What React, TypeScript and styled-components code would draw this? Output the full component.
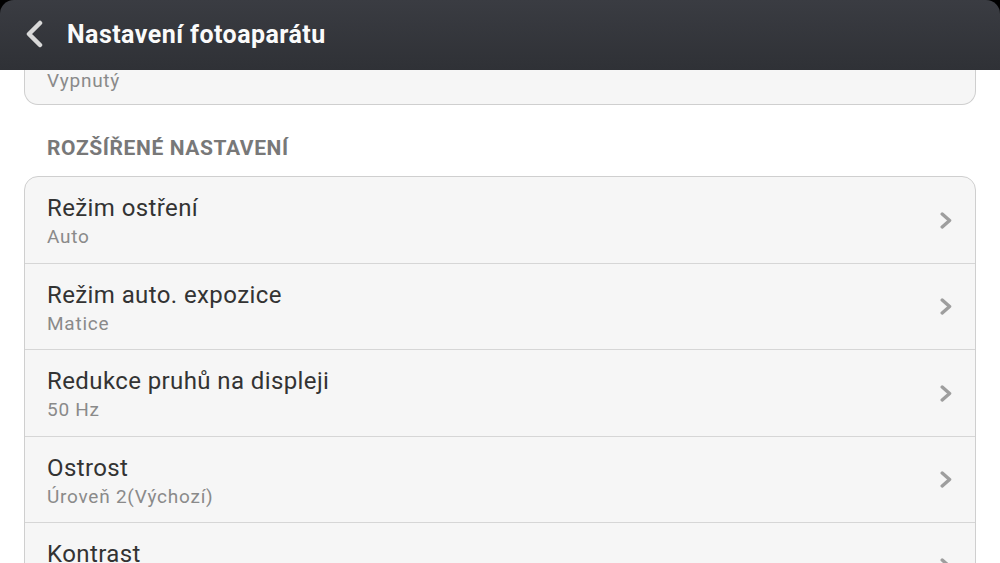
import React from "react";
import styled, { createGlobalStyle } from "styled-components";

// Camera settings screen: dark title bar, cut-off card on top, then the advanced section

const GlobalStyle = createGlobalStyle`
  html, body {
    margin: 0;
    padding: 0;
    background: #000;
    font-family: Roboto, "Noto Sans", "Liberation Sans", sans-serif;
  }
  #root {
    width: 1000px;
    height: 563px;
  }
`;

type Item = { title: string; value?: string };

const advanced: Item[] = [
  { title: "Režim ostření", value: "Auto" },
  { title: "Režim auto. expozice", value: "Matice" },
  { title: "Redukce pruhů na displeji", value: "50 Hz" },
  { title: "Ostrost", value: "Úroveň 2(Výchozí)" },
  { title: "Kontrast", value: "Úroveň 2(Výchozí)" },
];

const Chevron: React.FC = () => (
  <ChevronIcon width="12" height="17" viewBox="0 0 12 17">
    <polyline points="2.2,2 9.6,8.5 2.2,15" />
  </ChevronIcon>
);

const App: React.FC = () => {
  return (
    <>
      <GlobalStyle />
      <Screen>
        {/* top bar with the back arrow */}
        <TitleBar>
          <BackIcon width="20" height="28" viewBox="0 0 20 28">
            <polyline points="16,3 5,14 16,25" />
          </BackIcon>
          <Title>Nastavení fotoaparátu</Title>
        </TitleBar>

        <Content>
          {/* the end of the card above, scrolled under the bar */}
          <StubCard>
            <Value>Vypnutý</Value>
          </StubCard>

          <SectionLabel>Rozšířené nastavení</SectionLabel>

          <Card>
            {advanced.map((item) => (
              <Row key={item.title}>
                <RowText>
                  <RowTitle>{item.title}</RowTitle>
                  {item.value && <Value>{item.value}</Value>}
                </RowText>
                <Chevron />
              </Row>
            ))}
          </Card>
        </Content>
      </Screen>
    </>
  );
};

const Screen = styled.div`
  width: 1000px;
  height: 563px;
  display: flex;
  flex-direction: column;
  overflow: hidden;
  background: #000;
`;

const TitleBar = styled.header`
  flex: 0 0 70px;
  display: flex;
  align-items: center;
  gap: 23px;
  padding: 0 0 0 24px;
  border-radius: 14px 14px 0 0;
  background: linear-gradient(#3a3c42, #2f3136);
  box-sizing: border-box;
`;

const BackIcon = styled.svg`
  fill: none;
  stroke: #d9d9d9;
  stroke-width: 4.5;
  stroke-linecap: round;
  stroke-linejoin: round;
  margin-top: -2px;
`;

const Title = styled.h1`
  margin: 0;
  font-size: 25px;
  font-weight: 700;
  color: #fafafa;
  letter-spacing: 0.45px;
  margin-top: -2px;
`;

const Content = styled.main`
  flex: 1;
  background: #fff;
  padding: 0 24px;
  overflow: hidden;
`;

const StubCard = styled.div`
  background: #f6f6f6;
  border: 1px solid #cfcfcf;
  border-top: none;
  border-radius: 0 0 14px 14px;
  padding: 0 22px 12px;
`;

const SectionLabel = styled.h2`
  margin: 31px 0 16px 23px;
  font-size: 21px;
  line-height: 24px;
  font-weight: 700;
  letter-spacing: 0.6px;
  text-transform: uppercase;
  color: #787878;
`;

const Card = styled.section`
  background: #f6f6f6;
  border: 1px solid #cfcfcf;
  border-radius: 14px;
  overflow: hidden;
`;

const Row = styled.div`
  display: flex;
  align-items: center;
  padding: 17px 23px 13.5px 22px;
  border-bottom: 1px solid #d6d6d6;
`;

const RowText = styled.div`
  flex: 1;
  display: flex;
  flex-direction: column;
  gap: 3px;
`;

const RowTitle = styled.div`
  font-size: 24px;
  line-height: 28px;
  letter-spacing: 0.4px;
  color: #333;
`;

const Value = styled.div`
  font-size: 19px;
  line-height: 24px;
  letter-spacing: 0.75px;
  color: #8a8a8a;

  ${StubCard} & {
    line-height: 22px;
  }
`;

const ChevronIcon = styled.svg`
  fill: none;
  stroke: #9e9e9e;
  stroke-width: 3.4;
  stroke-linecap: round;
  stroke-linejoin: round;
  margin-top: -3px;
`;

export default App;
